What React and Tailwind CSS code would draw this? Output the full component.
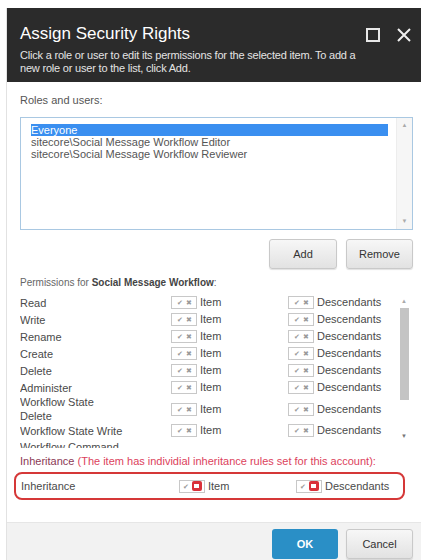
import React from "react";

const font = { fontFamily: '"Liberation Sans", Arial, sans-serif' };

const perms = [
  "Read",
  "Write",
  "Rename",
  "Create",
  "Delete",
  "Administer",
  "Workflow State Delete",
  "Workflow State Write",
  "Workflow Command",
];

function Toggle({ red }) {
  return (
    <span className="flex h-[13px] w-[26px] items-center justify-center gap-[3px] border border-[#c8c8c8] bg-white">
      <span className="text-[7px] leading-none text-[#9a9a9a]">✔</span>
      {red ? (
        <span className="flex h-[10px] w-[10px] items-center justify-center rounded-[2px] bg-[#d9313a]">
          <span className="h-[4px] w-[5px] bg-white" />
        </span>
      ) : (
        <span className="text-[7px] leading-none text-[#9a9a9a]">✖</span>
      )}
    </span>
  );
}

function PermRow({ label }) {
  const twoLine = label === "Workflow State Delete";
  const last = label === "Workflow Command";
  const h = twoLine ? "h-[26px]" : last ? "h-[30px]" : "h-[17px]";
  return (
    <div className={`flex items-center ${h}`}>
      <div
        className={`w-[151px] text-[11px] leading-[14px] text-[#4a4a4a] ${last ? "mt-[1px] self-start" : ""}`}
      >
        {twoLine ? (
          <>
            Workflow State
            <br />
            Delete
          </>
        ) : (
          label
        )}
      </div>
      <div className="flex w-[117px] items-center gap-[3px]">
        <Toggle />
        <span className="text-[11px] text-[#4a4a4a]">Item</span>
      </div>
      <div className="flex items-center gap-[3px]">
        <Toggle />
        <span className="text-[11px] text-[#4a4a4a]">Descendants</span>
      </div>
    </div>
  );
}

function Btn({ children, w }) {
  return (
    <button
      className={`${w} h-[30px] rounded-[3px] border border-[#c9c9c9] bg-gradient-to-b from-[#f7f7f7] to-[#e2e2e2] text-[11px] text-[#333] shadow-[0_1px_1px_rgba(0,0,0,0.12)]`}
    >
      {children}
    </button>
  );
}

export default function App() {
  return (
    <div className="h-[560px] w-[421px] overflow-hidden bg-white pl-[6px] pt-[8px]" style={font}>
      <div className="flex h-[552px] flex-col border-l border-[#e2e2e2]">
        {/* title bar */}
        <div className="relative h-[74px] shrink-0 bg-[#2b2b2b] pl-[13px] pt-[16px]">
          <div className="text-[17px] leading-[20px] text-white">Assign Security Rights</div>
          <div className="mt-[5px] w-[350px] text-[11px] leading-[13px] tracking-[-0.2px] text-[#e4e4e4]">
            Click a role or user to edit its permissions for the selected item. To add a new role or user to the list, click Add.
          </div>
          <div className="absolute right-[41px] top-[20px] h-[14px] w-[14px] border-2 border-[#e8e8e8]" />
          <svg className="absolute right-[9px] top-[19px]" width="16" height="16" viewBox="0 0 16 16">
            <path d="M2 2 L14 14 M14 2 L2 14" stroke="#f0f0f0" strokeWidth="2" />
          </svg>
        </div>

        {/* body */}
        <div className="flex-1 pl-[13px] pr-[8px]">
          <div className="mt-[12px] text-[11px] leading-[13px] text-[#555]">Roles and users:</div>
          <div className="mt-[10px] flex h-[113px] border border-[#a9c8e2]">
            <div className="flex-1 pl-[10px] pt-[6px] text-[11px] leading-[12px] text-[#555]">
              <div className="bg-[#3a8ff0] text-white">Everyone</div>
              <div>sitecore\Social Message Workflow Editor</div>
              <div>sitecore\Social Message Workflow Reviewer</div>
            </div>
            <div className="ml-[8px] flex w-[16px] flex-col items-center justify-between border-l border-[#ededed] bg-[#f6f6f6] py-[3px] text-[6px] text-[#aaa]">
              <span>▲</span>
              <span>▼</span>
            </div>
          </div>
          <div className="mt-[9px] flex justify-end gap-[9px]">
            <Btn w="w-[68px]">Add</Btn>
            <Btn w="w-[67px]">Remove</Btn>
          </div>
          <div className="mt-[8px] text-[10px] leading-[12px] text-[#666]">
            Permissions for <b className="text-[#444]">Social Message Workflow</b>:
          </div>
          <div className="mt-[5px] flex h-[154px] overflow-hidden">
            <div className="flex-1">
              {perms.map((p) => (
                <PermRow key={p} label={p} />
              ))}
            </div>
            <div className="mr-[4px] flex w-[10px] flex-col items-center">
              <span className="mt-[3px] text-[6px] leading-[8px] text-[#aaa]">▲</span>
              <div className="mt-[3px] h-[92px] w-[9px] bg-[#c4c4c4]" />
              <span className="mt-[32px] text-[6px] leading-[8px] text-[#777]">▼</span>
            </div>
          </div>
          <div className="mt-[7px] text-[11px] leading-[13px]">
            <span className="text-[#8b3a55]">Inheritance</span>{" "}
            <span className="text-[#dc3f5c]">(The item has individial inheritance rules set for this account):</span>
          </div>
          <div className="-ml-[6px] mt-[4px] flex h-[28px] w-[391px] items-center rounded-[8px] border-2 border-[#d53838] pl-[5px]">
            <div className="w-[158px] text-[11px] text-[#4a4a4a]">Inheritance</div>
            <div className="flex w-[117px] items-center gap-[3px]">
              <Toggle red />
              <span className="text-[11px] text-[#4a4a4a]">Item</span>
            </div>
            <div className="flex items-center gap-[3px]">
              <Toggle red />
              <span className="text-[11px] text-[#4a4a4a]">Descendants</span>
            </div>
          </div>
        </div>

        {/* footer */}
        <div className="flex h-[38px] shrink-0 items-start justify-end gap-[8px] border-t border-[#e6e6e6] bg-[#f2f2f2] pr-[8px] pt-[6px]">
          <button className="h-[30px] w-[66px] rounded-[3px] bg-[#2a8fc6] text-[11px] font-bold text-white">OK</button>
          <Btn w="w-[67px]">Cancel</Btn>
        </div>
      </div>
    </div>
  );
}
